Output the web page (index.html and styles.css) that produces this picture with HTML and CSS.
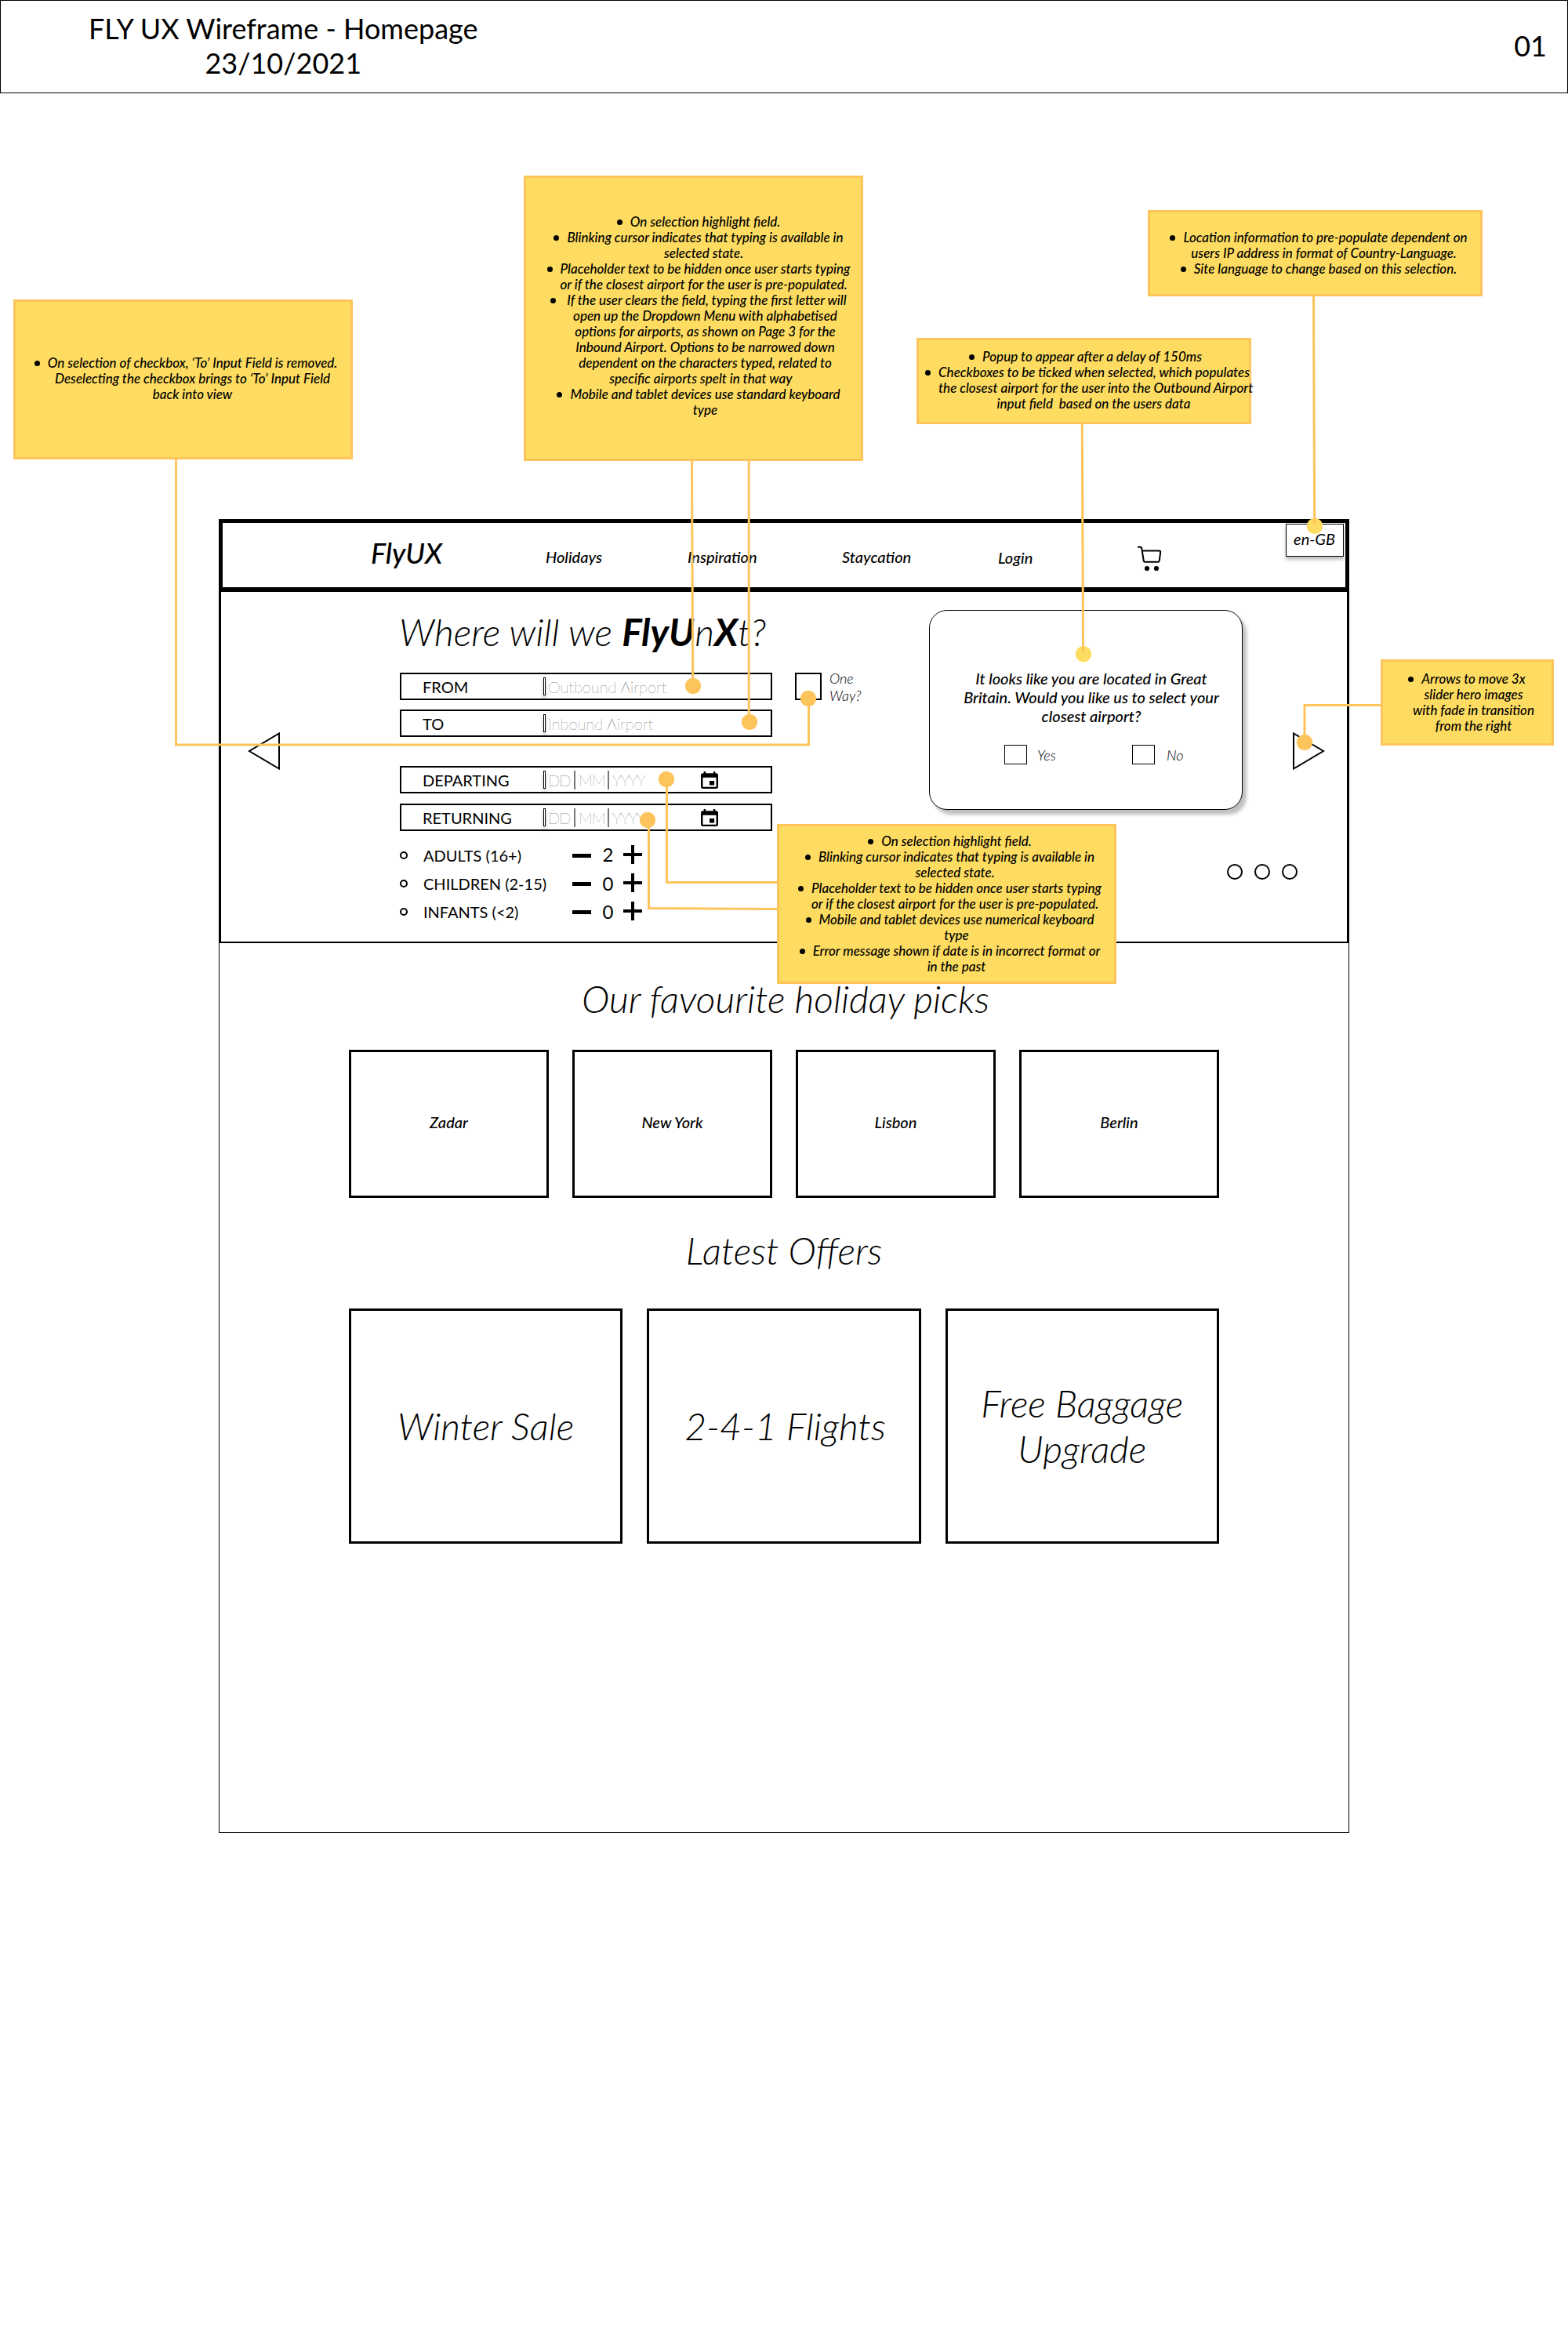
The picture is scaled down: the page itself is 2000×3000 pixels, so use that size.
FILE: index.html
```html
<!DOCTYPE html>
<html lang="en">
<head>
<meta charset="utf-8">
<title>FLY UX Wireframe - Homepage</title>
<link rel="stylesheet" href="styles.css">
</head>
<body>
<div class="board">
  <header class="sheet-header">
    <p class="sheet-title">FLY UX Wireframe - Homepage<br>23/10/2021</p>
    <p class="sheet-number">01</p>
  </header>

  <main class="frame">
    <nav class="nav">
      <a class="logo">FlyUX</a>
      <a class="nav-link">Holidays</a>
      <a class="nav-link">Inspiration</a>
      <a class="nav-link">Staycation</a>
      <a class="nav-link nav-login">Login</a>
      <svg class="cart" width="32" height="34" viewBox="0 0 32 34">
        <path d="M1 1.800H4.800Q6 1.800 6.200 3L8.700 19Q9 20.800 10.500 20.800H27Q28.500 20.800 28.800 19L30.200 8.500Q30.400 6.600 28.800 6.600H7" fill="none" stroke="#000" stroke-width="2"/>
        <circle cx="13" cy="29" r="3.100"/><circle cx="25" cy="29" r="3.100"/>
      </svg>
      <a class="locale">en-GB</a>
    </nav>

    <section class="hero">
      <svg class="arrow arrow-left" width="42" height="48" viewBox="0 0 42 48"><path d="M40 1.500V46.500L2 24Z"/></svg>
      <form class="search">
        <h1 class="headline">Where will we <b>FlyU</b>n<b>X</b>t?</h1>
        <div class="field"><span class="label">FROM</span><i class="cursor"></i><span class="hint">Outbound Airport</span></div>
        <div class="field field-to"><span class="label">TO</span><i class="cursor"></i><span class="hint">Inbound Airport</span></div>
        <div class="field field-departing"><span class="label">DEPARTING</span><i class="cursor"></i><span class="hint date"><span class="dd">DD</span><span class="mm">MM</span><span class="yy">YYYY</span></span>
          <svg class="calendar" width="22" height="22" viewBox="3 1 18 20" preserveAspectRatio="none"><path d="M17 12h-5v5h5v-5zM16 1v2H8V1H6v2H5c-1.110 0-1.990.9-1.990 2L3 19c0 1.100.89 2 2 2h14c1.100 0 2-.9 2-2V5c0-1.100-.9-2-2-2h-1V1h-2zm3 18H5V8h14v11z"/></svg></div>
        <div class="field field-returning"><span class="label">RETURNING</span><i class="cursor"></i><span class="hint date"><span class="dd">DD</span><span class="mm">MM</span><span class="yy">YYYY</span></span>
          <svg class="calendar" width="22" height="22" viewBox="3 1 18 20" preserveAspectRatio="none"><path d="M17 12h-5v5h5v-5zM16 1v2H8V1H6v2H5c-1.110 0-1.990.9-1.990 2L3 19c0 1.100.89 2 2 2h14c1.100 0 2-.9 2-2V5c0-1.100-.9-2-2-2h-1V1h-2zm3 18H5V8h14v11z"/></svg></div>
        <div class="guests">
          <div class="guest"><i class="ring"></i><span class="guest-name">ADULTS (16+)</span><i class="minus"></i><span class="count count-adults">2</span><i class="plus"></i></div>
          <div class="guest"><i class="ring"></i><span class="guest-name">CHILDREN (2-15)</span><i class="minus"></i><span class="count">0</span><i class="plus"></i></div>
          <div class="guest"><i class="ring"></i><span class="guest-name">INFANTS (&lt;2)</span><i class="minus"></i><span class="count">0</span><i class="plus"></i></div>
        </div>
      </form>
      <div class="one-way"><i class="one-way-box"></i><span class="one-way-label">One<br>Way?</span></div>
      <div class="hero-side">
        <div class="side-row">
          <div class="popup">
            <p class="popup-text">It looks like you are located in Great<br>Britain. Would you like us to select your<br>closest airport?</p>
            <div class="choices"><i class="check"></i><span class="choice yes">Yes</span><i class="check"></i><span class="choice">No</span></div>
          </div>
          <svg class="arrow arrow-right" width="42" height="48" viewBox="0 0 42 48"><path d="M2 1.500V46.500L40 24Z"/></svg>
        </div>
        <div class="dots"><i class="dot"></i><i class="dot"></i><i class="dot"></i></div>
      </div>
    </section>

    <section class="content">
      <h2 class="section-title">Our favourite holiday picks</h2>
      <div class="picks">
        <div class="pick">Zadar</div><div class="pick">New York</div><div class="pick">Lisbon</div><div class="pick">Berlin</div>
      </div>
      <h2 class="section-title offers-title">Latest Offers</h2>
      <div class="offers">
        <div class="offer">Winter Sale</div><div class="offer offer-flights">2-4-1 Flights</div><div class="offer">Free Baggage<br>Upgrade</div>
      </div>
    </section>
  </main>

  <svg class="connectors" width="2000" height="3000" viewBox="0 0 2000 3000">
    <g class="wires">
      <path d="M224.500 586V950H1031.500V891"/>
      <path d="M882.500 588L883.700 875"/>
      <path d="M955.200 588V920"/>
      <path d="M850.500 994V1125.500H991"/>
      <path d="M827.500 1046V1158.500L991 1159.500"/>
      <path d="M1761 899.500H1664V947"/>
    </g>
    <g class="pins">
      <circle cx="884" cy="875" r="10.200"/><circle cx="956" cy="921" r="10.200"/><circle cx="1031" cy="891" r="10.200"/>
      <circle cx="850" cy="994" r="10.200"/><circle cx="826" cy="1046" r="10.200"/><circle cx="1664" cy="947" r="10.200"/>
    </g>
    <g class="pins-light">
      <circle cx="1382" cy="834.300" r="10.200"/><circle cx="1677" cy="671" r="10.200"/>
    </g>
    <g class="wires">
      <path d="M1380.300 541L1381.600 832"/>
      <path d="M1675.500 378L1676.700 669"/>
    </g>
  </svg>

  <ul class="note note-oneway">
    <li>On selection of checkbox, ‘To’ Input Field is removed.<br>Deselecting the checkbox brings to ‘To’ Input Field<br>back into view</li>
  </ul>
  <ul class="note note-airports">
    <li>On selection highlight field.</li>
    <li>Blinking cursor indicates that typing is available in<br>selected state.&nbsp;</li>
    <li>Placeholder text to be hidden once user starts typing<br>or if the closest airport for the user is pre-populated.&nbsp;</li>
    <li>&nbsp;If the user clears the field, typing the first letter will<br>open up the Dropdown Menu with alphabetised<br>options for airports, as shown on Page 3 for the<br>Inbound Airport. Options to be narrowed down<br>dependent on the characters typed, related to<br>specific airports spelt in that way&nbsp;&nbsp;&nbsp;</li>
    <li>Mobile and tablet devices use standard keyboard<br>type</li>
  </ul>
  <ul class="note note-location">
    <li>Location information to pre-populate dependent on<br>users IP address in format of Country-Language.&nbsp;</li>
    <li>Site language to change based on this selection.</li>
  </ul>
  <ul class="note note-popup">
    <li>Popup to appear after a delay of 150ms&nbsp;</li>
    <li>Checkboxes to be ticked when selected, which populates<br>the closest airport for the user into the Outbound Airport<br>input field&nbsp; based on the users data</li>
  </ul>
  <ul class="note note-arrows">
    <li>Arrows to move 3x<br>slider hero images<br>with fade in transition<br>from the right</li>
  </ul>
  <ul class="note note-dates">
    <li>On selection highlight field.</li>
    <li>Blinking cursor indicates that typing is available in<br>selected state.&nbsp;</li>
    <li>Placeholder text to be hidden once user starts typing<br>or if the closest airport for the user is pre-populated.&nbsp;</li>
    <li>Mobile and tablet devices use numerical keyboard<br>type</li>
    <li>Error message shown if date is in incorrect format or<br>in the past</li>
  </ul>
</div>
</body>
</html>
```
FILE: styles.css
```css
* { box-sizing: border-box; }
body, p, h1, h2, ul { margin: 0; padding: 0; }
body { background: #fff; color: #000; font-family: Lato, "Liberation Sans", sans-serif; font-size: 20px; line-height: 24px; }
.board { position: relative; width: 2000px; height: 3000px; }

.sheet-header { display: flex; justify-content: space-between; height: 119px; border: 1px solid #000; font-size: 36px; line-height: 43.500px; padding: 14px 26px 0 112px; }
.sheet-title { text-align: center; }
.sheet-number { padding-top: 22px; }

.frame { width: 1442px; margin: 543px 0 0 279px; }
.nav { display: grid; grid-template-columns: 223px 181px 197px 199px 177px 190px auto; align-items: start; height: 92px; border: 5px solid #000; padding-left: 189px; font-style: italic; font-weight: 500; }
.logo { font-size: 36px; line-height: 43px; margin-top: 17px; }
.nav-link { margin-top: 31px; }
.nav-login { margin-top: 32px; }
.cart { margin-top: 29px; }
.locale { width: 74px; height: 42px; margin-top: 1px; border: 1px solid #000; background: #fff; text-align: center; padding: 6px 1px 0 0; font-weight: 400; box-shadow: 0 4px 4px rgba(0,0,0,.25); }

.hero { display: flex; align-items: flex-start; height: 449px; border: solid #000; border-width: 1px 3px 2px; }
.arrow { fill: none; stroke: #000; stroke-width: 2; flex: none; }
.arrow-left { margin: 179px 0 0 34px; }
.search { width: 475px; margin-left: 152px; flex: none; }
.headline { margin: 22px 0 23px -1px; font-size: 48px; line-height: 58px; font-style: italic; font-weight: 300; white-space: nowrap; }
.headline b { font-weight: 700; }
.field { display: flex; align-items: center; height: 35px; border: 2px solid #000; padding-left: 28px; margin-bottom: 12px; }
.field-to { margin-bottom: 37px; }
.field-departing { margin-bottom: 13px; }
.field-returning { margin-bottom: 13px; }
.label { width: 153px; margin-left: -1px; margin-right: 1px; }
.cursor { width: 3px; height: 23px; border: 1px solid #000; box-shadow: 0 4px 4px rgba(0,0,0,.25); }
.hint { font-weight: 100; margin-left: 3px; }
.date { display: flex; width: 195px; letter-spacing: -1px; }
.dd { width: 33px; }
.mm, .yy { border-left: 2px solid #777; padding-left: 4px; }
.mm { width: 43px; }
.guest { display: flex; align-items: center; height: 36px; }
.ring { width: 10px; height: 10px; border: 2px solid #000; border-radius: 50%; }
.guest-name { width: 190px; margin-left: 20px; }
.minus { width: 24px; height: 5px; background: #000; }
.count { width: 41px; padding-left: 2px; text-align: center; font-size: 24px; }
.count-adults { padding-bottom: 3px; }
.plus { width: 24px; height: 24px; margin-bottom: 2px; background: linear-gradient(#000,#000) center/24px 4px no-repeat, linear-gradient(#000,#000) center/4px 24px no-repeat; }
.one-way { display: flex; margin: 103px 0 0 29px; width: 171px; flex: none; }
.one-way-box { width: 34px; height: 35px; border: 2px solid #000; }
.one-way-label { margin: -4px 0 0 10px; font-size: 18px; line-height: 22px; font-style: italic; font-weight: 300; }
.side-row { display: flex; align-items: flex-start; }
.popup { width: 400px; height: 255px; margin-top: 23px; border: 1px solid #000; border-radius: 23px; background: #fff; box-shadow: 5px 6px 4px rgba(0,0,0,.25); padding-top: 74px; }
.popup-text { text-align: center; font-style: italic; font-weight: 500; padding-left: 14px; white-space: nowrap; }
.choices { display: flex; align-items: center; margin: 24px 0 0 95px; font-size: 18px; font-style: italic; font-weight: 300; }
.check { width: 29px; height: 25px; border: 1px solid #000; }
.choice { margin-left: 13px; padding-top: 2px; }
.yes { width: 121px; }
.choice:last-child { margin-left: 15px; }
.arrow-right { margin: 179px 0 0 63px; }
.dots { display: flex; gap: 15px; margin: 69px 0 0 380px; }
.dot { width: 20px; height: 20px; border: 2px solid #000; border-radius: 50%; }

.content { height: 1135px; border: solid #000; border-width: 0 1px 1px; padding: 42px 165px 0; }
.section-title { font-size: 48px; line-height: 58px; font-style: italic; font-weight: 300; text-align: center; padding-left: 4px; }
.picks { display: flex; gap: 30px; margin-top: 36px; }
.pick { width: 255px; height: 189px; border: 3px solid #000; display: flex; align-items: center; justify-content: center; padding-bottom: 6px; font-style: italic; font-weight: 500; }
.offers-title { margin-top: 38px; padding-left: 0; }
.offers { display: flex; gap: 31px; margin-top: 45px; }
.offer { width: 350px; height: 300px; border: 3px solid #000; display: flex; align-items: center; justify-content: center; text-align: center; font-size: 48px; line-height: 58px; font-style: italic; font-weight: 300; }
.offer-flights { padding-left: 3px; }

.connectors { position: absolute; left: 0; top: 0; }
.wires { fill: none; stroke: #fdc45b; stroke-width: 3; }
.pins { fill: #fdc45b; }
.pins-light { fill: #fedc61; }

.note { position: absolute; display: flex; flex-direction: column; justify-content: center; background: #fedc61; border: 3px solid #fdc45b; list-style: none; text-align: center; white-space: nowrap; font-size: 17px; line-height: 20px; font-style: italic; font-weight: 500; }
.note li::before { content: ""; display: inline-block; width: 7px; height: 7px; margin: 0 10px 2px -17px; border-radius: 50%; background: #000; }
.note-oneway { left: 17px; top: 382px; width: 433px; height: 204px; padding: 0 0 2px 24px; }
.note-airports { left: 668px; top: 224px; width: 433px; height: 364px; padding: 0 0 6px 30px; }
.note-location { left: 1464px; top: 268px; width: 427px; height: 110px; padding-left: 26px; }
.note-popup { left: 1169px; top: 431px; width: 427px; height: 110px; padding: 0 0 2px 25px; }
.note-arrows { left: 1761px; top: 841px; width: 221px; height: 110px; padding-left: 16px; }
.note-dates { left: 991px; top: 1051px; width: 433px; height: 204px; padding-left: 25px; }
```
